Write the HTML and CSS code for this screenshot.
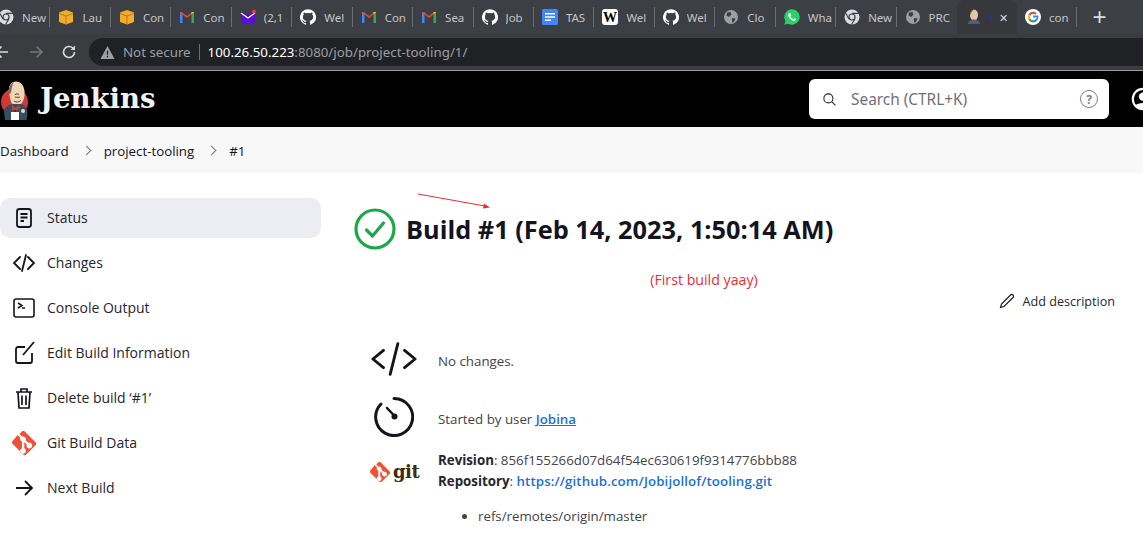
FILE: index.html
```html
<!DOCTYPE html>
<html lang="en">
<head>
<meta charset="utf-8">
<title>project-tooling #1 [Jenkins]</title>
<link rel="stylesheet" href="styles.css">
</head>
<body>
<svg class="defs" width="0" height="0" aria-hidden="true">
  <defs>
    <symbol id="chrome" viewBox="0 0 16 16"><circle cx="8" cy="8" r="7.5" fill="#dadce0"/><circle cx="8" cy="8" r="3.6" fill="#3c3f43"/><circle cx="8" cy="8" r="2.4" fill="#dadce0"/><path d="M8 4.400h7M5 10 1.600 4M10.900 10 7.500 15.500" stroke="#3c3f43" stroke-width="1.100"/></symbol>
    <symbol id="box" viewBox="0 0 16 16"><path d="M1 3.500 8 1l7 2.500V13l-7 2.500L1 13z" fill="#f2ac2c"/><path d="M1 4.500 8 7l7-2.500M8 7v8.500" stroke="#b97a10" stroke-width="1" fill="none"/></symbol>
    <symbol id="gmail" viewBox="0 0 16 16"><path d="M1 3h2.500v11H1z" fill="#4285f4"/><path d="M12.500 3H15v11h-2.500z" fill="#34a853"/><path d="M1 3.500 8 9l7-5.500V3h-1.800L8 7 2.800 3H1z" fill="#ea4335"/><path d="M12.500 5.500 15 3.500V3h-2.500z" fill="#fbbc04"/></symbol>
    <symbol id="github" viewBox="0 0 16 16"><path fill="#fff" d="M8 .2a8 8 0 0 0-2.500 15.600c.4.100.5-.2.500-.4v-1.400c-2.200.5-2.700-1-2.700-1-.4-.900-.9-1.200-.9-1.200-.7-.5.100-.5.100-.5.800.100 1.200.8 1.200.8.700 1.200 1.900.9 2.300.7.100-.5.300-.9.500-1.100-1.800-.2-3.600-.9-3.600-4 0-.9.300-1.600.8-2.100-.1-.2-.4-1 .1-2.100 0 0 .7-.2 2.200.8a7.600 7.600 0 0 1 4 0c1.500-1 2.200-.8 2.200-.8.400 1.100.200 1.900.1 2.100.5.500.8 1.200.8 2.100 0 3.100-1.900 3.800-3.700 4 .3.300.6.700.6 1.500v2.200c0 .2.100.5.600.4A8 8 0 0 0 8 .2z"/></symbol>
    <symbol id="globe" viewBox="0 0 16 16"><circle cx="8" cy="8" r="7" fill="#9aa0a6"/><path d="M4 3.500 7.500 3l1 2.500L6 8 3.500 6.500zM9 9l3.500.5L11 13l-2 .5z" fill="#3c3f43"/></symbol>
    <symbol id="gitmark" viewBox="0 0 24 24"><path fill="#f05133" d="M23.300 11 13 .7a2.400 2.400 0 0 0-3.400 0L7.500 2.900l2.700 2.700a2.900 2.900 0 0 1 3.600 3.600l2.600 2.600a2.900 2.900 0 1 1-1.700 1.600l-2.400-2.400v6.300a2.900 2.900 0 1 1-2.400-.1V10.500a2.900 2.900 0 0 1-1.500-3.800L5.700 4 .7 9.700a2.400 2.400 0 0 0 0 3.400L11 23.300a2.400 2.400 0 0 0 3.400 0l8.900-8.900a2.400 2.400 0 0 0 0-3.400z"/></symbol>
  </defs>
</svg>

<div class="tabstrip">
  <div class="tab"><svg class="fav"><use href="#chrome"/></svg><span class="tabtext">New</span></div>
  <div class="tab"><svg class="fav"><use href="#box"/></svg><span class="tabtext">Lau</span></div>
  <div class="tab"><svg class="fav"><use href="#box"/></svg><span class="tabtext">Con</span></div>
  <div class="tab"><svg class="fav"><use href="#gmail"/></svg><span class="tabtext">Con</span></div>
  <div class="tab"><svg class="fav" viewBox="0 0 16 16"><path d="M1 4h14v10H1z" fill="#5a0fd6"/><path d="m1 4 7 5 7-5" fill="none" stroke="#fff" stroke-width="1.300"/><circle cx="14" cy="2.500" r="2" fill="#f0334d"/></svg><span class="tabtext">(2,1</span></div>
  <div class="tab"><svg class="fav"><use href="#github"/></svg><span class="tabtext">Wel</span></div>
  <div class="tab"><svg class="fav"><use href="#gmail"/></svg><span class="tabtext">Con</span></div>
  <div class="tab"><svg class="fav"><use href="#gmail"/></svg><span class="tabtext">Sea</span></div>
  <div class="tab"><svg class="fav"><use href="#github"/></svg><span class="tabtext">Job</span></div>
  <div class="tab"><svg class="fav" viewBox="0 0 16 16"><rect width="16" height="16" rx="1.500" fill="#4285f4"/><path d="M3 4h10v1.500H3zM3 7.300h10v1.500H3zM3 10.600h6v1.500H3z" fill="#fff"/></svg><span class="tabtext">TAS</span></div>
  <div class="tab"><svg class="fav" viewBox="0 0 16 16"><rect width="16" height="16" rx="3" fill="#fff"/><text x="8" y="12.500" class="wiki">W</text></svg><span class="tabtext">Wel</span></div>
  <div class="tab"><svg class="fav"><use href="#github"/></svg><span class="tabtext">Wel</span></div>
  <div class="tab"><svg class="fav"><use href="#globe"/></svg><span class="tabtext">Clo</span></div>
  <div class="tab"><svg class="fav" viewBox="0 0 16 16"><path d="M8 .3a7.700 7.700 0 0 0-6.600 11.600L.3 15.700l3.900-1A7.700 7.700 0 1 0 8 .3z" fill="#25d366"/><path d="M5.500 4c-.5 0-1.200.7-1.200 1.900 0 2.400 3 5.800 5.900 5.900 1.200 0 1.900-1 1.900-1.600l-1.900-1-.8.900C8.300 9.800 6.900 8.400 6.500 7.300l.8-.8L6.500 4z" fill="#fff"/></svg><span class="tabtext">Wha</span></div>
  <div class="tab"><svg class="fav"><use href="#chrome"/></svg><span class="tabtext">New</span></div>
  <div class="tab tab-last"><svg class="fav"><use href="#globe"/></svg><span class="tabtext">PRC</span></div>
  <div class="tab tab-active"><svg class="fav" viewBox="0 0 16 16"><ellipse cx="8" cy="6" rx="4" ry="5.500" fill="#e8c4a8"/><path d="M4 6C3.800 2 6 .5 8 .5 6 2 5 4 4 6z" fill="#6b5a50"/><path d="M2 15c0-3 3-4.500 6-4.500s6 1.500 6 4.500z" fill="#3f6484"/><path d="M5.500 11.500h5L8 13.500z" fill="#d33833"/></svg><span class="active-bar"></span><span class="closex">✕</span></div>
  <div class="tab"><svg class="fav" viewBox="0 0 16 16"><circle cx="8" cy="8" r="8" fill="#fff"/><path d="M8 7.500h4.600c.2 2.600-1.600 4.600-4.600 4.600a4.200 4.200 0 1 1 2.800-7.300" fill="none" stroke="#4285f4" stroke-width="1.800"/><path d="M11 4.900A4.200 4.200 0 0 0 4.600 6" fill="none" stroke="#ea4335" stroke-width="1.800"/><path d="M4.500 5.600a4.200 4.200 0 0 0 0 4.800" fill="none" stroke="#fbbc04" stroke-width="1.800"/><path d="M4.500 10.300A4.200 4.200 0 0 0 11.500 11" fill="none" stroke="#34a853" stroke-width="1.800"/></svg><span class="tabtext">con</span></div>
  <span class="newtab">+</span>
</div>

<div class="toolbar">
  <svg class="navicon back" viewBox="0 0 16 16"><path d="M14 8H2M7.500 2.500 2 8l5.500 5.500" fill="none" stroke="#dadce0" stroke-width="1.600"/></svg>
  <svg class="navicon" viewBox="0 0 16 16"><path d="M2 8h12M8.500 2.500 14 8l-5.500 5.500" fill="none" stroke="#74777b" stroke-width="1.600"/></svg>
  <svg class="navicon" viewBox="0 0 16 16"><path d="M13.500 8a5.500 5.500 0 1 1-1.700-4" fill="none" stroke="#dadce0" stroke-width="1.600"/><path d="M14 1.500V6H9.500z" fill="#dadce0"/></svg>
  <div class="omnibox">
    <svg class="warn" viewBox="0 0 16 16"><path d="M8 1 15.500 15H.5z" fill="#9aa0a6"/><path d="M7.300 6h1.400v4.500H7.300zM7.300 11.500h1.400V13H7.300z" fill="#202124"/></svg>
    <span class="notsecure">Not secure</span>
    <span class="urlbar-sep"></span>
    <span class="url"><span class="host">100.26.50.223</span>:8080/job/project-tooling/1/</span>
  </div>
</div>

<header class="jenkins-head">
  <svg class="logo" viewBox="0 0 30 40">
    <circle cx="14.500" cy="22" r="13.500" fill="#d33833"/>
    <path d="M9 13C8 6 11 1.500 16 1.500c5 0 8 4 8.500 10 .4 5-1 10-3.500 12.500-3 2.500-8 2-10-2z" fill="#f0d6b5"/>
    <path d="M9 14C8 9 10 4 14 2c-2 3-2 6-2.500 8 0 2-1 4-2.500 4z" fill="#6d6b6d"/>
    <path d="M15 14.500c1.500-.8 3-.8 4 0M15 17c2 .5 4 .5 5 0M14 21c2 1.500 5 1.200 7-.5" fill="none" stroke="#5a3a2a" stroke-width="1"/>
    <path d="M4 32c.5-4 3-7 8-8l9 0c4 1 6 4 6.500 8l-1 8H5z" fill="#335061"/>
    <path d="M12 24.500 15.500 28l3.500-3 1.500 2.500-4 3-1.500-1-3 1.500z" fill="#d33833"/>
    <path d="M14.500 30h1.500v10h-1.500z" fill="#1e3240"/>
    <path d="M11 32h8v8h-8z" fill="#fff"/>
    <circle cx="23" cy="31" r="2" fill="#f0d6b5"/>
  </svg>
  <span class="brand">Jenkins</span>
  <div class="search">
    <svg class="search-icon" viewBox="0 0 16 16"><circle cx="6.800" cy="6.800" r="4.800" fill="none" stroke="#222" stroke-width="1.100"/><path d="m10.300 10.300 4 4" stroke="#222" stroke-width="1.100"/></svg>
    <span class="search-text">Search (CTRL+K)</span>
    <span class="help">?</span>
  </div>
  <svg class="user" viewBox="0 0 20 20"><circle cx="10" cy="10" r="8.500" fill="none" stroke="#fff" stroke-width="1.800"/><circle cx="10" cy="8" r="3.500" fill="#fff"/><path d="M3.500 15.500c2-3 11-3 13 0-3 3.500-10 3.500-13 0z" fill="#fff"/></svg>
</header>

<nav class="crumbs">
  <span>Dashboard</span><span class="chev"></span><span>project-tooling</span><span class="chev"></span><span>#1</span>
</nav>

<main class="page">
  <aside class="side">
    <a class="side-item side-active">
      <span class="side-ic"><svg viewBox="0 0 24 24"><rect x="5" y="3" width="14" height="18" rx="2.500" fill="none" stroke="#14141f" stroke-width="1.800"/><path d="M8.500 8h7M8.500 11.500h7M8.500 15h3.500" stroke="#14141f" stroke-width="1.800"/></svg></span>Status</a>
    <a class="side-item"><span class="side-ic"><svg viewBox="0 0 24 24"><path d="M8 6 2 12l6 6M16 6l6 6-6 6M14 4l-4 16" fill="none" stroke="#14141f" stroke-width="1.800" stroke-linecap="round"/></svg></span>Changes</a>
    <a class="side-item"><span class="side-ic"><svg viewBox="0 0 24 24"><rect x="2" y="3" width="20" height="18" rx="2" fill="none" stroke="#14141f" stroke-width="1.600"/><path d="m6 7 4 2.500L6 12M10 12h3" fill="none" stroke="#14141f" stroke-width="1.500"/></svg></span>Console Output</a>
    <a class="side-item"><span class="side-ic"><svg viewBox="0 0 24 24"><path d="M13 6H6a2 2 0 0 0-2 2v12a2 2 0 0 0 2 2h12a2 2 0 0 0 2-2v-8" fill="none" stroke="#14141f" stroke-width="1.800"/><path d="M22 1 11 14" stroke="#14141f" stroke-width="1.800"/></svg></span>Edit Build Information</a>
    <a class="side-item"><span class="side-ic"><svg viewBox="0 0 24 24"><path d="M4 6h16M9 6V3h6v3M6 6l1 16h10l1-16M10 9.500V19M14 9.500V19" fill="none" stroke="#14141f" stroke-width="1.700"/></svg></span>Delete build ‘#1’</a>
    <a class="side-item"><span class="side-ic"><svg viewBox="0 0 24 24"><use href="#gitmark"/></svg></span>Git Build Data</a>
    <a class="side-item"><span class="side-ic"><svg viewBox="0 0 24 24"><path d="M4 12h16M13 5l7 7-7 7" fill="none" stroke="#14141f" stroke-width="1.800"/></svg></span>Next Build</a>
  </aside>

  <section class="content">
    <svg class="arrow-note" viewBox="0 0 74 16"><path d="M1 1 68 13" stroke="#ef2b36" stroke-width="1"/><path d="M73 14.500 66 15.500 67 10.500z" fill="#ef2b36"/></svg>
    <h1 class="title">
      <svg class="ok" viewBox="0 0 42 42"><circle cx="21" cy="21" r="19" fill="none" stroke="#1ea64a" stroke-width="3.200"/><path d="m12.500 22 6 6 11-13" fill="none" stroke="#1ea64a" stroke-width="3.200" stroke-linecap="round" stroke-linejoin="round"/></svg>
      Build #1 (Feb 14, 2023, 1:50:14 AM)
    </h1>
    <p class="note">(First build yaay)</p>
    <div class="desc-row">
      <a class="add-desc"><svg class="pencil" viewBox="0 0 16 16"><path d="M1.500 14.500 2.500 11 11.500 2a1.500 1.500 0 0 1 2.500 2.500L5 13.500z" fill="none" stroke="#14141f" stroke-width="1.100"/></svg>Add description</a>
    </div>
    <div class="rows">
      <div class="row row-a">
        <svg class="row-ic" viewBox="0 0 48 34"><path d="M13 8 2 17l11 9M35 8l11 9-11 9M28 1 20 33" fill="none" stroke="#14141f" stroke-width="3" stroke-linecap="round" stroke-linejoin="round"/></svg>
        <span>No changes.</span>
      </div>
      <div class="row row-b">
        <svg class="row-ic timer" viewBox="0 0 40 40"><path d="M20 1.500A18.500 18.500 0 1 1 7 7" fill="none" stroke="#14141f" stroke-width="3" stroke-linecap="round"/><path d="m13 11 8.500 9" stroke="#14141f" stroke-width="2.500" stroke-linecap="round"/><circle cx="20.500" cy="19.500" r="3" fill="#14141f"/></svg>
        <span>Started by user <a class="link link-u">Jobina</a></span>
      </div>
      <div class="row row-c">
        <div class="git-logo"><svg viewBox="0 0 24 24"><use href="#gitmark"/></svg><span class="git-word">git</span></div>
        <div>
          <div class="line"><b>Revision</b>: 856f155266d07d64f54ec630619f9314776bbb88</div>
          <div class="line"><b>Repository</b>: <a class="link link-long">https://github.com/Jobijollof/tooling.git</a></div>
          <ul class="refs"><li>refs/remotes/origin/master</li></ul>
        </div>
      </div>
    </div>
  </section>
</main>
</body>
</html>
```
FILE: styles.css
```css
* { box-sizing: border-box; }
html, body { margin: 0; height: 553px; overflow: hidden; }
body { background: #fff; font-family: "Open Sans", "Noto Sans", "Liberation Sans", sans-serif; color: #14141f; }
.defs { display: block; height: 0; }

.tabstrip { height: 34px; background: #3c3f43; display: flex; align-items: center; margin-left: -10px; width: 1153px; overflow: hidden; }
.tab { width: 60.450px; height: 34px; flex: none; display: flex; align-items: center; padding-left: 8px; gap: 8px; position: relative; }
.tab::after { content: ""; position: absolute; right: 0; top: 7px; height: 20px; width: 1px; background: #6a6d71; }
.tab-last::after, .tab-active::after { display: none; }
.tab-active { background: #36383c; border-radius: 8px 8px 0 0; gap: 0; padding-left: 9px; width: 60px; }
.fav { width: 16px; height: 16px; flex: none; }
.tabtext { font-size: 11.500px; color: #c4c7cb; width: 27px; overflow: hidden; white-space: nowrap; font-family: "Noto Sans", sans-serif; }
.wiki { font-family: "Liberation Serif", serif; font-size: 14px; text-anchor: middle; fill: #000; font-weight: 700; }
.active-bar { width: 1px; height: 8px; background: #33348a; margin: 0 8px 0 8px; flex: none; }
.closex { color: #dadce0; font-size: 11px; line-height: 1; }
.newtab { color: #dadce0; font-size: 24px; font-weight: 300; line-height: 1; margin-left: 15px; font-family: "Liberation Sans", sans-serif; }

.toolbar { height: 37px; background: #3a3c40; display: flex; align-items: center; gap: 17.500px; border-bottom: 1px solid #9b9da0; margin-left: -6px; width: 1149px; }
.navicon { width: 16px; height: 16px; flex: none; }
.omnibox { flex: 1; height: 28px; background: #202124; border-radius: 14px 0 0 14px; display: flex; align-items: center; padding-left: 11px; margin-left: -5.500px; }
.warn { width: 15px; height: 15px; flex: none; }
.notsecure { font-size: 13.300px; color: #9aa0a6; margin-left: 8px; font-family: "Noto Sans", sans-serif; }
.urlbar-sep { width: 1px; height: 16px; background: #6a6d71; margin: 0 8px; }
.url { font-size: 13.300px; color: #9aa0a6; font-family: "Noto Sans", sans-serif; }
.host { color: #fff; }

.jenkins-head { height: 56px; background: #000; display: flex; align-items: center; overflow: hidden; width: 1143px; }
.logo { width: 30px; height: 40px; flex: none; margin: 2px 0 0 0; }
.brand { font-family: "DejaVu Serif", serif; font-weight: 700; font-size: 27.500px; color: #f2f2f2; margin: -2px 0 0 10px; }
.search { width: 300px; height: 40px; margin-left: auto; background: #fff; border-radius: 6px; display: flex; align-items: center; padding-left: 13px; flex: none; }
.search-icon { width: 15px; height: 15px; flex: none; }
.search-text { font-size: 15.400px; color: #6f6f78; margin-left: 14px; font-family: "Noto Sans", sans-serif; }
.help { width: 18px; height: 18px; border: 1.500px solid #7c7c92; color: #7c7c92; border-radius: 50%; margin-left: auto; margin-right: 11px; font-size: 12px; font-weight: 700; display: flex; align-items: center; justify-content: center; }
.user { width: 24px; height: 24px; flex: none; margin: 0 -12px 0 22px; }

.crumbs { height: 46px; padding-top: 1px; background: #f8f8f8; display: flex; align-items: center; font-size: 13.300px; color: #14141f; }
.chev { width: 7px; height: 7px; border-top: 1px solid #777; border-right: 1px solid #777; transform: rotate(45deg); margin: 0 14px; }

.page { display: flex; padding-top: 25px; }
.side { width: 321px; flex: none; display: flex; flex-direction: column; gap: 5px; }
.side-item { height: 40px; padding-bottom: 2px; display: flex; align-items: center; font-size: 14px; font-weight: 500; color: #26262f; border-radius: 10px; }
.side-active { background: #ecedf2; }
.side-ic { width: 24px; height: 24px; margin: 2px 11px 0 12px; flex: none; display: block; }
.side-ic svg { width: 24px; height: 24px; display: block; }

.content { position: relative; flex: 1; padding-left: 33px; }
.arrow-note { position: absolute; left: 96px; top: -5px; width: 74px; height: 16px; }
.title { margin: 10px 0 0; display: flex; align-items: center; gap: 10px; font-size: 25.350px; font-weight: 700; line-height: 42px; color: #14141f; white-space: nowrap; }
.ok { width: 42px; height: 42px; flex: none; }
.note { margin: 20px 0 0; width: 700px; text-align: center; font-size: 14.200px; line-height: 20px; color: #ef2b36; }
.desc-row { display: flex; justify-content: flex-end; padding-right: 28px; }
.add-desc { display: flex; align-items: center; font-size: 12.600px; color: #26262f; gap: 8px; height: 22px; }
.pencil { width: 16px; height: 16px; }

.rows { padding-left: 16px; margin-top: 30px; font-size: 13.300px; color: #43434b; }
.row { display: flex; align-items: center; }
.row-ic { width: 46px; height: 34px; flex: none; margin-left: 1px; margin-right: 21px; }
.row-a { height: 34px; }
.row-a span { margin-top: 4px; }
.row-b { margin-top: 21px; height: 40px; }
.row-b span { margin-top: 4px; }
.timer { width: 40px; height: 40px; margin-left: 4px; margin-right: 24px; }
.row-c { margin-top: 13px; align-items: flex-start; }
.git-logo { width: 48px; margin-right: 20px; display: flex; align-items: center; gap: 3px; margin-top: 12px; flex: none; }
.git-logo svg { width: 20px; height: 20px; flex: none; }
.git-word { font-family: "DejaVu Serif", serif; font-weight: 700; font-size: 18px; line-height: 20px; color: #3c2c10; letter-spacing: -.5px; }
.line { line-height: 21px; }
.line b { color: #26262f; }
.link { color: #1a6fd9; font-weight: 600; }
.link-u { text-decoration: underline; }
.link-long { letter-spacing: .1px; }
.refs { margin: 14px 0 0; padding-left: 40px; line-height: 20px; }
```
